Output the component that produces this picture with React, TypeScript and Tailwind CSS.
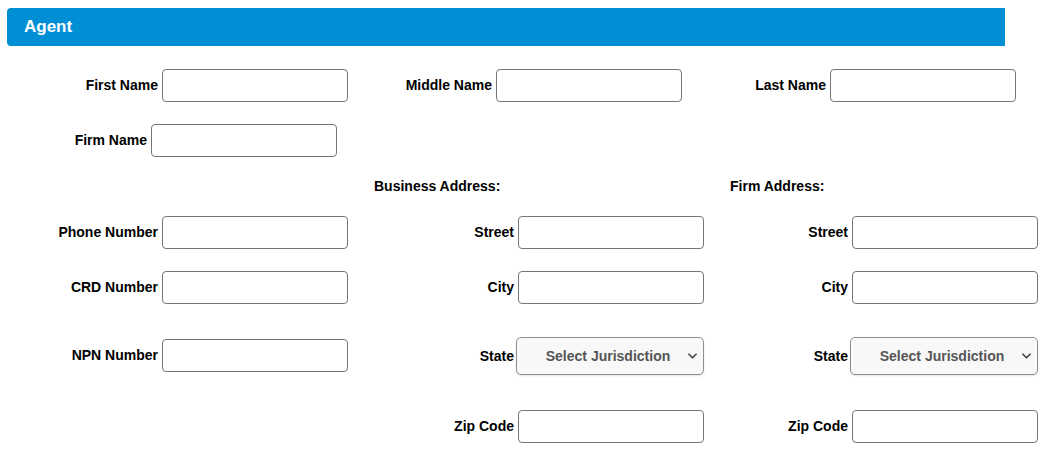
import { type ReactNode } from 'react'

// Agent details block: three-column label/input grid with two address columns.

type FieldProps = {
  label: string
  width: string
  children?: ReactNode
}

function Field({ label, width, children }: FieldProps) {
  return (
    <div className={`flex shrink-0 items-center justify-end ${width}`}>
      <label className="mr-1 text-[14px] font-bold whitespace-nowrap text-black">{label}</label>
      {children ?? (
        <input
          type="text"
          className="h-[33px] w-[186px] rounded-[4px] border border-[#767676] bg-white px-2 text-[14px] outline-none"
        />
      )}
    </div>
  )
}

function JurisdictionSelect() {
  return (
    <div className="relative -ml-0.5 h-[38px] w-[188px]">
      <select className="h-full w-full appearance-none rounded-[5px] border border-[#8f8f8f] bg-[#f8f8f8] pr-5 pl-4 text-center text-[14px] font-bold text-[#555] shadow-[0_1px_2px_rgba(0,0,0,0.12)] outline-none">
        <option>Select Jurisdiction</option>
      </select>
      <svg
        viewBox="0 0 10 6"
        className="pointer-events-none absolute top-[16px] right-[7px] h-[6px] w-[9px]"
        fill="none"
        stroke="#444"
        strokeWidth="1.8"
        strokeLinecap="round"
        strokeLinejoin="round"
      >
        <path d="M1 1l4 4 4-4" />
      </svg>
    </div>
  )
}

export default function App() {
  return (
    <div className="min-h-[453px] bg-white pt-2 pl-[7px] font-['Liberation_Sans',Arial,sans-serif]">
      <div className="flex h-[38px] w-[998px] items-center rounded-l-[4px] bg-[#008fd5] pl-[17px]">
        <h2 className="text-[17px] font-bold text-white">Agent</h2>
      </div>

      <div className="ml-px">
        <div className="mt-[18px] flex h-[42px]">
          <Field label="First Name" width="w-[340px]" />
          <Field label="Middle Name" width="w-[334px]" />
          <Field label="Last Name" width="w-[334px]" />
        </div>

        <div className="mt-[13px] flex h-[42px]">
          <Field label="Firm Name" width="w-[329px]" />
        </div>

        <div className="mt-[10px] flex h-[30px] items-center">
          <div className="w-[340px] shrink-0" />
          <div className="w-[356px] shrink-0 pl-[26px] text-[14px] font-bold">Business Address:</div>
          <div className="w-[334px] shrink-0 pl-[26px] text-[14px] font-bold">Firm Address:</div>
        </div>

        <div className="mt-[10px] flex h-[42px]">
          <Field label="Phone Number" width="w-[340px]" />
          <Field label="Street" width="w-[356px]" />
          <Field label="Street" width="w-[334px]" />
        </div>

        <div className="mt-[13px] flex h-[42px]">
          <Field label="CRD Number" width="w-[340px]" />
          <Field label="City" width="w-[356px]" />
          <Field label="City" width="w-[334px]" />
        </div>

        <div className="mt-[27px] flex h-[42px]">
          <Field label="NPN Number" width="w-[340px] -mt-[2px]" />
          <Field label="State" width="w-[356px]">
            <JurisdictionSelect />
          </Field>
          <Field label="State" width="w-[334px]">
            <JurisdictionSelect />
          </Field>
        </div>

        <div className="mt-[28px] flex h-[42px]">
          <div className="w-[340px] shrink-0" />
          <Field label="Zip Code" width="w-[356px]" />
          <Field label="Zip Code" width="w-[334px]" />
        </div>
      </div>
    </div>
  )
}
